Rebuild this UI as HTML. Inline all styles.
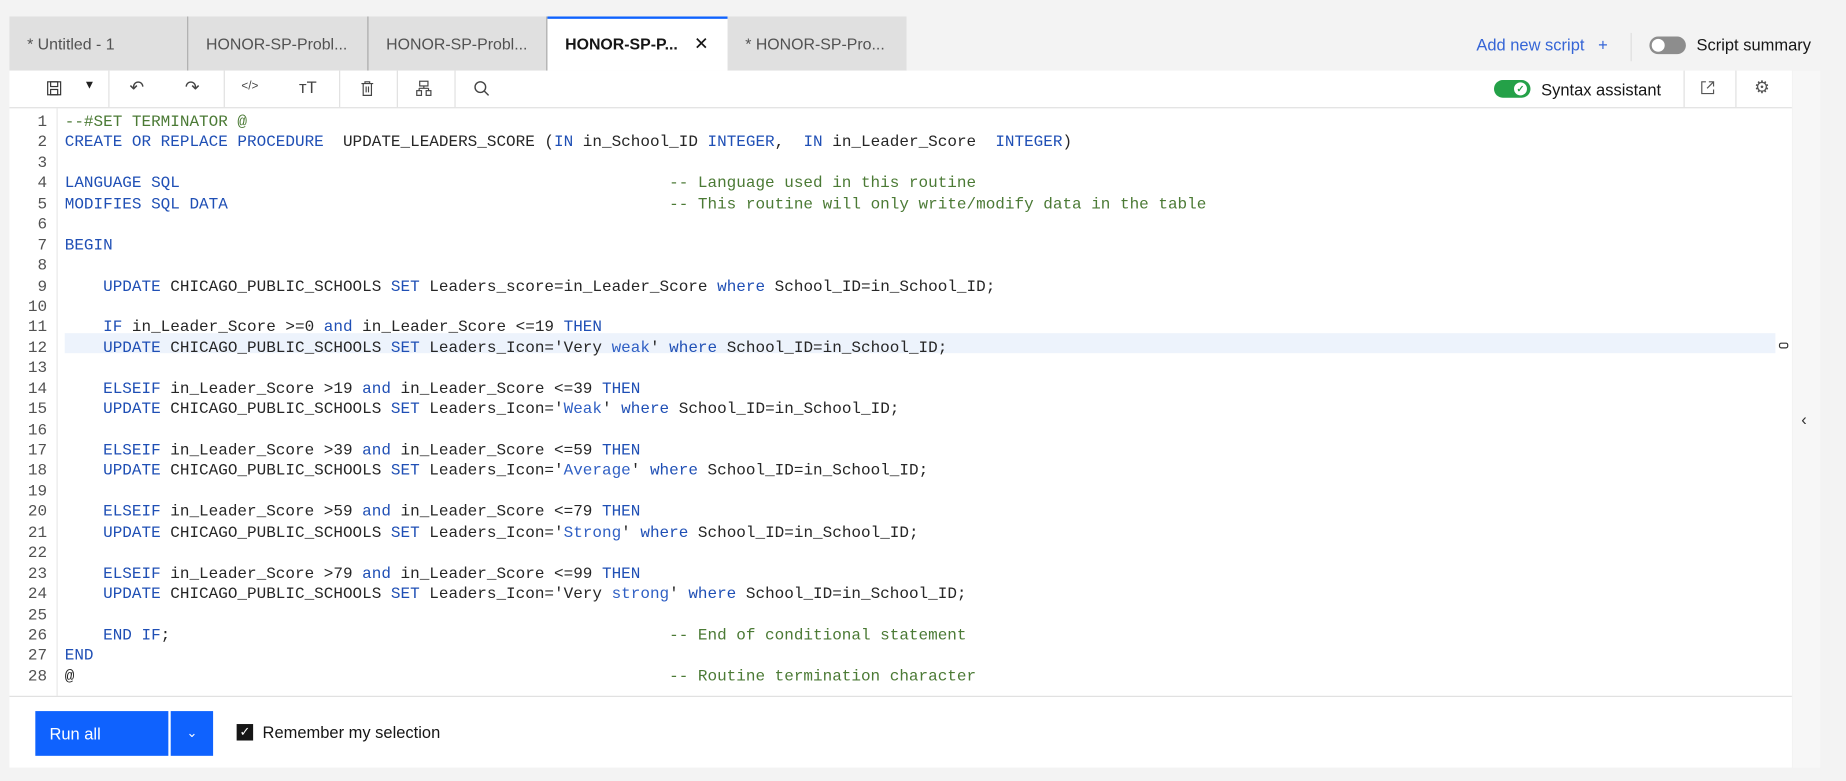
<!DOCTYPE html>
<html><head><meta charset="utf-8"><style>
html,body{margin:0;padding:0;}
body{width:1846px;height:780px;overflow:hidden;background:#f3f3f3;font-family:"Liberation Sans",sans-serif;}
#w{position:absolute;left:0;top:0;width:1568px;height:663px;transform:scale(1.17730);transform-origin:0 0;background:#f3f3f3;}
.tab{position:absolute;top:14px;height:46px;background:#e0e0e0;font-size:13.5px;color:#525252;line-height:48px;padding-left:15px;box-sizing:border-box;border-right:1px solid #a8a8a8;}
.tab.a{background:#fff;color:#161616;font-weight:bold;border-top:2px solid #0f62fe;line-height:44px;border-right:none;}
.abs{position:absolute;}
#panel{position:absolute;left:8px;top:60px;width:1514px;height:592px;background:#fff;}
#tb{position:absolute;left:0;top:0;width:1514px;height:31px;border-bottom:1px solid #e0e0e0;}
.sep{position:absolute;top:0;width:1px;height:31px;background:#e0e0e0;}
.ic{position:absolute;top:8px;}
#code{position:absolute;left:0;top:36px;font-family:"Liberation Mono",monospace;font-size:13.58px;line-height:17.44px;color:#262626;white-space:pre;}
.ln{position:absolute;left:0;width:32px;text-align:right;color:#525252;}
.cl{position:absolute;left:47px;}
.k{color:#1f4fb5}.c{color:#4b7a35}.s{color:#2f5fc4}
#gut{position:absolute;left:40px;top:32px;width:1px;height:500px;background:#e8e8e8;}
</style></head><body><div id="w">
<div class="tab" style="left:8px;width:152px;">* Untitled - 1</div>
<div class="tab" style="left:160px;width:153px;">HONOR-SP-Probl...</div>
<div class="tab" style="left:313px;width:152px;">HONOR-SP-Probl...</div>
<div class="tab a" style="left:465px;width:153px;">HONOR-SP-P... <span style="margin-left:10px;font-weight:normal;font-size:15px">✕</span></div>
<div class="tab" style="left:618px;width:152px;border-right:none">* HONOR-SP-Pro...</div>
<div class="abs" style="left:1254px;top:30px;font-size:14px;color:#3565d6;">Add new script &nbsp;&nbsp;+</div>
<div class="abs" style="left:1385px;top:28px;width:1px;height:24px;background:#ddd"></div>
<div class="abs" style="left:1401px;top:31px;width:31px;height:15px;border-radius:8px;background:#8d8d8d"></div>
<div class="abs" style="left:1403px;top:33px;width:11px;height:11px;border-radius:6px;background:#fff"></div>
<div class="abs" style="left:1441px;top:30px;font-size:14px;color:#161616;">Script summary</div>
<div class="abs" style="left:1523px;top:60px;width:23px;height:592px;background:#f7f7f7"></div>
<div class="abs" style="left:1530px;top:348px;font-size:14px;color:#333">&#8249;</div>
<div id="panel">
 <div id="tb">
  <svg class="ic" style="left:31px" width="14" height="14" viewBox="0 0 14 14" fill="none" stroke="#333" stroke-width="1"><rect x="1.5" y="1.5" width="11" height="11"/><rect x="4" y="1.5" width="6" height="4"/><rect x="4" y="8" width="6" height="4.5"/></svg>
  <div class="abs" style="left:63px;top:7px;font-size:10px;color:#222">▼</div>
  <div class="sep" style="left:84px"></div>
  <div class="abs" style="left:102px;top:5px;font-size:15px;color:#444">↶</div>
  <div class="abs" style="left:149px;top:5px;font-size:15px;color:#444">↷</div>
  <div class="sep" style="left:182px"></div>
  <div class="abs" style="left:197px;top:8px;font-size:10px;color:#444">&lt;/&gt;</div>
  <div class="abs" style="left:246px;top:6px;font-size:14px;color:#444">ᴛT</div>
  <div class="sep" style="left:280px"></div>
  <svg class="ic" style="left:297px" width="14" height="14" viewBox="0 0 14 14" fill="none" stroke="#444"><path d="M2 3h10M5 3V1.5h4V3M3.5 3v10h7V3M6 5.5v5M8 5.5v5"/></svg>
  <div class="sep" style="left:329px"></div>
  <svg class="ic" style="left:345px" width="14" height="14" viewBox="0 0 14 14" fill="none" stroke="#444"><rect x="3.5" y="1" width="7" height="4"/><path d="M7 5v2M3 7h8M3 7v2M11 7v2"/><rect x="1" y="9" width="4" height="4"/><rect x="9" y="9" width="4" height="4"/></svg>
  <div class="sep" style="left:378px"></div>
  <svg class="ic" style="left:394px" width="14" height="14" viewBox="0 0 14 14" fill="none" stroke="#444" stroke-width="1.2"><circle cx="6" cy="6" r="4.5"/><path d="M9.3 9.3L13 13"/></svg>
  <div class="abs" style="left:1261px;top:8px;width:31px;height:15px;border-radius:8px;background:#24a148"></div>
  <div class="abs" style="left:1278px;top:10px;width:11px;height:11px;border-radius:6px;background:#fff;color:#24a148;font-size:8px;line-height:11px;text-align:center;font-weight:bold">✓</div>
  <div class="abs" style="left:1301px;top:8px;font-size:14px;color:#161616">Syntax assistant</div>
  <div class="sep" style="left:1422px"></div>
  <svg class="ic" style="left:1436px" width="13" height="13" viewBox="0 0 13 13" fill="none" stroke="#555"><path d="M5 1.5H1.5v10h10V8M7.5 1.5h4v4M11.5 1.5L6 7"/></svg>
  <div class="sep" style="left:1466px"></div>
  <div class="abs" style="left:1482px;top:5px;font-size:15px;color:#555">⚙</div>
 </div>
 <div id="gut"></div>
 <div class="abs" style="left:47px;top:223px;width:1453px;height:17px;background:#edf3fc"></div>
 <div class="abs" style="left:1503px;top:231px;width:6px;height:3px;border:1px solid #333;border-radius:2px"></div>
 <div id="code">
<div class="ln" style="top:0">1
2
3
4
5
6
7
8
9
10
11
12
13
14
15
16
17
18
19
20
21
22
23
24
25
26
27
28</div>
<div class="cl" style="top:0"><span class="c">--#SET TERMINATOR @</span>
<span class="k">CREATE OR REPLACE PROCEDURE</span>  UPDATE_LEADERS_SCORE (<span class="k">IN</span> in_School_ID <span class="k">INTEGER</span>,  <span class="k">IN</span> in_Leader_Score  <span class="k">INTEGER</span>)

<span class="k">LANGUAGE SQL</span>                                                   <span class="c">-- Language used in this routine</span>
<span class="k">MODIFIES SQL DATA</span>                                              <span class="c">-- This routine will only write/modify data in the table</span>

<span class="k">BEGIN</span>

    <span class="k">UPDATE</span> CHICAGO_PUBLIC_SCHOOLS <span class="k">SET</span> Leaders_score=in_Leader_Score <span class="k">where</span> School_ID=in_School_ID;

    <span class="k">IF</span> in_Leader_Score &gt;=0 <span class="k">and</span> in_Leader_Score &lt;=19 <span class="k">THEN</span>
    <span class="k">UPDATE</span> CHICAGO_PUBLIC_SCHOOLS <span class="k">SET</span> Leaders_Icon='Very <span class="s">weak</span>' <span class="k">where</span> School_ID=in_School_ID;

    <span class="k">ELSEIF</span> in_Leader_Score &gt;19 <span class="k">and</span> in_Leader_Score &lt;=39 <span class="k">THEN</span>
    <span class="k">UPDATE</span> CHICAGO_PUBLIC_SCHOOLS <span class="k">SET</span> Leaders_Icon='<span class="s">Weak</span>' <span class="k">where</span> School_ID=in_School_ID;

    <span class="k">ELSEIF</span> in_Leader_Score &gt;39 <span class="k">and</span> in_Leader_Score &lt;=59 <span class="k">THEN</span>
    <span class="k">UPDATE</span> CHICAGO_PUBLIC_SCHOOLS <span class="k">SET</span> Leaders_Icon='<span class="s">Average</span>' <span class="k">where</span> School_ID=in_School_ID;

    <span class="k">ELSEIF</span> in_Leader_Score &gt;59 <span class="k">and</span> in_Leader_Score &lt;=79 <span class="k">THEN</span>
    <span class="k">UPDATE</span> CHICAGO_PUBLIC_SCHOOLS <span class="k">SET</span> Leaders_Icon='<span class="s">Strong</span>' <span class="k">where</span> School_ID=in_School_ID;

    <span class="k">ELSEIF</span> in_Leader_Score &gt;79 <span class="k">and</span> in_Leader_Score &lt;=99 <span class="k">THEN</span>
    <span class="k">UPDATE</span> CHICAGO_PUBLIC_SCHOOLS <span class="k">SET</span> Leaders_Icon='Very <span class="s">strong</span>' <span class="k">where</span> School_ID=in_School_ID;

    <span class="k">END IF</span>;                                                    <span class="c">-- End of conditional statement</span>
<span class="k">END</span>
@                                                              <span class="c">-- Routine termination character</span>
</div>
 </div>
 <div class="abs" style="left:0;top:531px;width:1514px;height:1px;background:#e0e0e0"></div>
 <div class="abs" style="left:22px;top:544px;width:113px;height:38px;background:#0f62fe;color:#fff;font-size:14px;line-height:38px;box-sizing:border-box;padding-left:12px">Run all</div>
 <div class="abs" style="left:137px;top:544px;width:36px;height:38px;background:#0f62fe;color:#fff;font-size:11px;line-height:38px;text-align:center">&#8964;</div>
 <div class="abs" style="left:193px;top:555px;width:14px;height:14px;background:#161616;color:#fff;font-size:11px;line-height:14px;text-align:center">✓</div>
 <div class="abs" style="left:215px;top:554px;font-size:14px;color:#161616">Remember my selection</div>
</div>
</div></body></html>
